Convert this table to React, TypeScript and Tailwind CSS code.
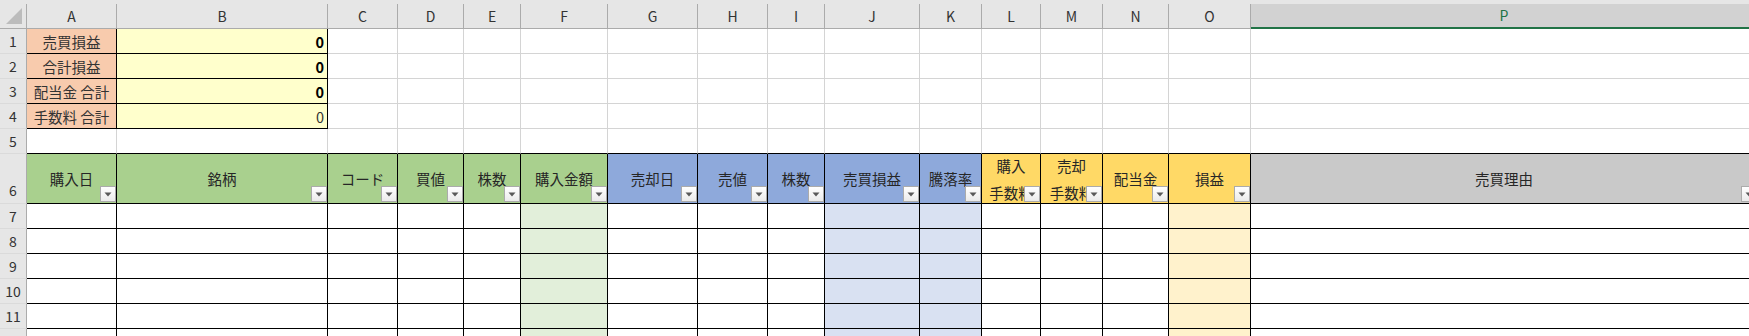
import React from "react";

const FONT = "font-['Noto_Sans_CJK_JP','Noto_Sans',sans-serif]";

type Col = { letter: string; label: string; head: string; body: string };

const cols: Col[] = [
  { letter: "A", label: "購入日", head: "bg-[#a9d08e]", body: "bg-white" },
  { letter: "B", label: "銘柄", head: "bg-[#a9d08e]", body: "bg-white" },
  { letter: "C", label: "コード", head: "bg-[#a9d08e]", body: "bg-white" },
  { letter: "D", label: "買値", head: "bg-[#a9d08e]", body: "bg-white" },
  { letter: "E", label: "株数", head: "bg-[#a9d08e]", body: "bg-white" },
  { letter: "F", label: "購入金額", head: "bg-[#a9d08e]", body: "bg-[#e2efda]" },
  { letter: "G", label: "売却日", head: "bg-[#8ea9db]", body: "bg-white" },
  { letter: "H", label: "売値", head: "bg-[#8ea9db]", body: "bg-white" },
  { letter: "I", label: "株数", head: "bg-[#8ea9db]", body: "bg-white" },
  { letter: "J", label: "売買損益", head: "bg-[#8ea9db]", body: "bg-[#d9e1f2]" },
  { letter: "K", label: "騰落率", head: "bg-[#8ea9db]", body: "bg-[#d9e1f2]" },
  { letter: "L", label: "購入\n手数料", head: "bg-[#ffd966]", body: "bg-white" },
  { letter: "M", label: "売却\n手数料", head: "bg-[#ffd966]", body: "bg-white" },
  { letter: "N", label: "配当金", head: "bg-[#ffd966]", body: "bg-white" },
  { letter: "O", label: "損益", head: "bg-[#ffd966]", body: "bg-[#fff2cc]" },
  { letter: "P", label: "売買理由", head: "bg-[#c9c9c9]", body: "bg-white" },
];

const summary = [
  { label: "売買損益", bold: true },
  { label: "合計損益", bold: true },
  { label: "配当金 合計", bold: true },
  { label: "手数料 合計", bold: false },
];

const rowHead =
  "flex items-center justify-center border-r border-b border-r-[#ababab] border-b-[#dadada] bg-[#e6e6e6] text-[14px] text-[#333]";

function FilterButton() {
  return (
    <span className="absolute right-0 bottom-[1px] flex h-4 w-4 items-center justify-center border border-[#ababab] bg-linear-to-b from-white to-[#ebebeb]">
      <svg width="8" height="5" viewBox="0 0 8 5">
        <path d="M0.5 0.5h7L4 4.5z" fill="#595959" />
      </svg>
    </span>
  );
}

export default function App() {
  return (
    <div className={`h-[336px] w-[1749px] overflow-hidden bg-white text-[#333] ${FONT}`}>
      <div className="h-[4px] bg-[#e6e6e6]" />
      <div className="grid w-max grid-cols-[27px_90px_211px_70px_66px_57px_87px_90px_70px_57px_95px_62px_59px_62px_66px_82px_507px]">
        {/* column letters */}
        <div className="relative h-[25px] border-r border-b border-[#ababab] bg-[#e6e6e6]">
          <svg className="absolute top-0 left-0" width="26" height="24" viewBox="0 0 26 24">
            <polygon points="22,4 22,20 6,20" fill="#bcbcbc" />
          </svg>
        </div>
        {cols.map((c) =>
          c.letter === "P" ? (
            <div
              key={c.letter}
              className="flex h-[25px] items-center justify-center border-r border-b-2 border-r-[#ababab] border-b-[#217346] bg-[#d2d2d2] text-[14px] text-[#217346]"
            >
              {c.letter}
            </div>
          ) : (
            <div
              key={c.letter}
              className="flex h-[25px] items-center justify-center border-r border-b border-[#ababab] bg-[#e6e6e6] text-[14px] text-[#333]"
            >
              {c.letter}
            </div>
          )
        )}

        {/* summary block, rows 1-4 */}
        {summary.map((s, i) => (
          <React.Fragment key={s.label}>
            <div className={`h-[25px] ${rowHead}`}>{i + 1}</div>
            <div className="flex h-[25px] items-center justify-center border-r border-b border-black bg-[#f8cbad] pt-[1px] text-[14.5px] whitespace-nowrap">
              {s.label}
            </div>
            <div
              className={`flex h-[25px] items-center justify-end border-r border-b border-black bg-[#ffffcc] pt-[1px] pr-[3px] text-[14.5px] ${
                s.bold ? "font-bold text-black" : "font-normal text-[#333]"
              }`}
            >
              0
            </div>
            {cols.slice(2).map((c) => (
              <div key={c.letter} className="h-[25px] border-r border-b border-[#d4d4d4]" />
            ))}
          </React.Fragment>
        ))}

        {/* row 5 */}
        <div className={`h-[25px] ${rowHead}`}>5</div>
        {cols.map((c) => (
          <div key={c.letter} className="h-[25px] border-r border-b border-r-[#d4d4d4] border-b-black" />
        ))}

        {/* row 6: table header */}
        <div className={`h-[50px] !items-end pb-[2px] ${rowHead}`}>6</div>
        {cols.map((c) => (
          <div
            key={c.letter}
            className={`relative flex h-[50px] items-center justify-center overflow-hidden border-r border-b border-black text-center text-[14.5px] leading-[27px] whitespace-pre text-[#262626] ${c.head}`}
          >
            {c.label}
            <FilterButton />
          </div>
        ))}

        {/* rows 7-12: empty data */}
        {[7, 8, 9, 10, 11, 12].map((r) => (
          <React.Fragment key={r}>
            <div className={`h-[25px] ${rowHead}`}>{r}</div>
            {cols.map((c) => (
              <div key={c.letter} className={`h-[25px] border-r border-b border-black ${c.body}`} />
            ))}
          </React.Fragment>
        ))}
      </div>
    </div>
  );
}
